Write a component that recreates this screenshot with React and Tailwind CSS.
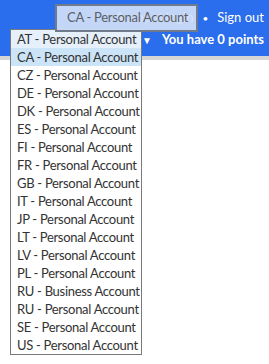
import React from 'react';

const accounts = [
  'AT - Personal Account',
  'CA - Personal Account',
  'CZ - Personal Account',
  'DE - Personal Account',
  'DK - Personal Account',
  'ES - Personal Account',
  'FI - Personal Account',
  'FR - Personal Account',
  'GB - Personal Account',
  'IT - Personal Account',
  'JP - Personal Account',
  'LT - Personal Account',
  'LV - Personal Account',
  'PL - Personal Account',
  'RU - Business Account',
  'RU - Personal Account',
  'SE - Personal Account',
  'US - Personal Account',
];

const App = () => {
  return (
    <div className="relative w-[269px] h-[364px] overflow-hidden bg-white text-[13px] font-['Lato',sans-serif]">
      {/* Header bar */}
      <header className="bg-[#2a6ded] h-[56px] text-white pr-[5px] pt-[7px]">
        <div className="flex justify-end items-center h-[22px] gap-[9px]">
          <span className="text-white/90">Account login</span>
          <span className="text-[10px]">&bull;</span>
          <span>Sign out</span>
        </div>
        <div className="flex justify-end items-center h-[22px]">
          <span className="text-[10px] mr-[10px]">&#9660;</span>
          <span className="font-bold">You have 0 points</span>
        </div>
      </header>
      <div className="h-[4px] bg-[#d6d6d6]" />

      {/* Open dropdown list */}
      <ul className="absolute left-[10px] top-[29px] w-[132px] border border-[#7a7a7a] bg-white text-[#333] tracking-[-0.3px]">
        {accounts.map((a, i) => (
          <li
            key={a}
            className={`h-[18px] leading-[18px] px-[6px] whitespace-nowrap ${i === 0 ? 'bg-[#e5f0fb]' : ''} ${i === 1 ? 'bg-[#cce4f7]' : ''}`}
          >
            {a}
          </li>
        ))}
      </ul>

      {/* Tooltip */}
      <div className="absolute left-[55px] top-[4px] w-[143px] h-[28px] border-2 border-[#6f7a8c] bg-[#d5e1f7]/90 text-[#5a5f66] flex items-center pl-[10px] whitespace-nowrap tracking-[-0.3px]">
        CA - Personal Account
      </div>
    </div>
  );
};

export default App;
